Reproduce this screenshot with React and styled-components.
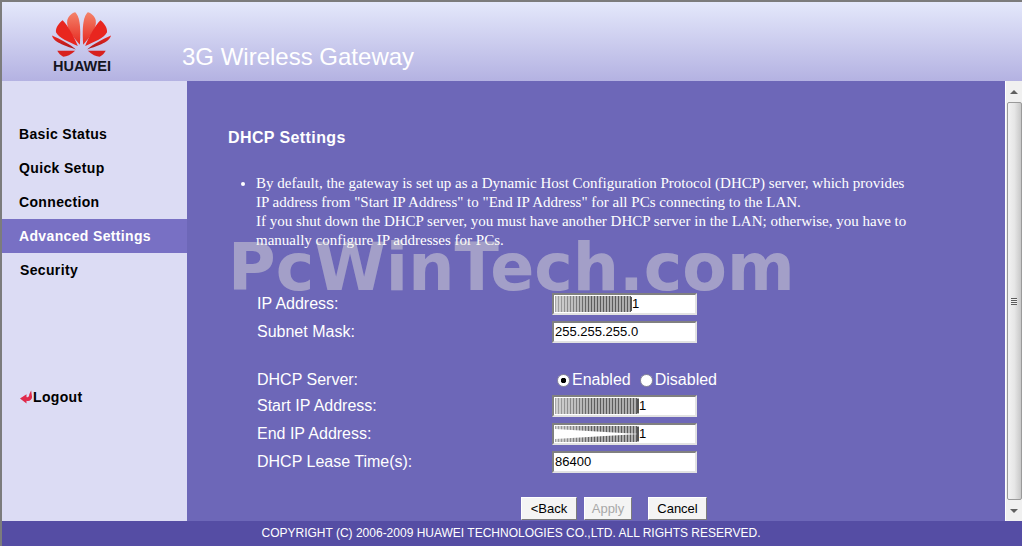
import React from 'react';
import styled, { createGlobalStyle } from 'styled-components';

const GlobalStyle = createGlobalStyle`
  html, body {
    margin: 0;
    height: 100%;
    overflow: hidden;
  }
`;

const Page = styled.div`
  width: 1022px;
  height: 546px;
  box-sizing: border-box;
  border-top: 2px solid #7c7c7c;
  border-left: 2px solid #7c7c7c;
  display: flex;
  flex-direction: column;
  font-family: 'Liberation Sans', Arial, sans-serif;
  overflow: hidden;
`;

const Header = styled.header`
  height: 79px;
  flex: none;
  display: flex;
  background: linear-gradient(#e4e8fb, #b4b2e2);
`;

const LogoBox = styled.div`
  width: 180px;
  flex: none;
  padding: 10px 0 0 50px;
  box-sizing: border-box;
  display: flex;
  flex-direction: column;
`;

const LogoWord = styled.div`
  font-size: 14.5px;
  line-height: 13px;
  font-weight: 700;
  color: #14141e;
  width: 60px;
  text-align: center;
  margin-top: 3px;
`;

const ProductName = styled.div`
  font-size: 24px;
  line-height: 28px;
  color: #fff;
  margin-top: 41px;
`;

const Middle = styled.div`
  flex: 1;
  min-height: 0;
  display: flex;
`;

const Sidebar = styled.nav`
  width: 185px;
  flex: none;
  background: #dcdcf4;
  padding-top: 36px;
  box-sizing: border-box;
  display: flex;
  flex-direction: column;
`;

const NavItem = styled.div`
  height: 34px;
  line-height: 34px;
  padding-left: ${(p) => p.$indent || 17}px;
  font-size: 14px;
  font-weight: 700;
  letter-spacing: 0.35px;
  color: ${(p) => (p.$active ? '#fff' : '#000')};
  background: ${(p) => (p.$active ? '#7870c4' : 'transparent')};
`;

const LogoutRow = styled.div`
  margin-top: 93px;
  height: 34px;
  padding-left: 18px;
  display: flex;
  align-items: center;
  font-size: 14px;
  font-weight: 700;
  letter-spacing: 0.35px;
  color: #000;
`;

const Content = styled.main`
  flex: 1;
  position: relative;
  background: #6d67b8;
  padding: 47px 0 0 41px;
  box-sizing: border-box;
  color: #fff;
  overflow: hidden;
`;

const Title = styled.h1`
  margin: 0;
  font-size: 16px;
  line-height: 20px;
  font-weight: 700;
  letter-spacing: 0.4px;
`;

const Notes = styled.ul`
  margin: 26px 0 0;
  padding: 0 0 0 28px;
  width: 660px;
  font-family: 'Liberation Serif', 'Times New Roman', serif;
  font-size: 15px;
  line-height: 19px;
`;

const Watermark = styled.div`
  position: absolute;
  left: 41px;
  top: 149px;
  font-family: 'DejaVu Sans', Verdana, sans-serif;
  font-size: 65px;
  line-height: 76px;
  font-weight: 700;
  color: rgba(244, 245, 224, 0.4);
  white-space: nowrap;
`;

const Form = styled.form`
  margin: 40px 0 0 29px;
  display: flex;
  flex-direction: column;
`;

const Row = styled.div`
  display: flex;
  align-items: center;
  height: ${(p) => p.$height || 28}px;
  margin-top: ${(p) => p.$gap || 0}px;
  font-size: 16px;
`;

const Label = styled.span`
  width: 295px;
  flex: none;
`;

const Field = styled.div`
  width: 145px;
  height: 22px;
  box-sizing: border-box;
  background: #fff;
  border: 2px solid;
  border-color: #808080 #e2e2e2 #e2e2e2 #808080;
  color: #000;
  font-size: 13px;
  line-height: 18px;
  padding-left: 1px;
  display: flex;
  align-items: center;
  white-space: nowrap;
  overflow: hidden;
`;

const Radios = styled.div`
  display: flex;
  align-items: center;
  padding-left: 5px;
  font-size: 16px;
`;

const Radio = styled.span`
  width: 13px;
  height: 13px;
  box-sizing: border-box;
  flex: none;
  border-radius: 50%;
  border: 1px solid #8d8d9d;
  background: radial-gradient(circle, ${(p) => (p.$on ? '#000 0 2.5px, #fff 3px' : '#fff 0 100%')});
  margin: 1px 2px 0 0;
`;

const RadioText = styled.span`
  margin-right: 9px;
`;

const Buttons = styled.div`
  display: flex;
  margin: 21px 0 0 264px;
`;

const Button = styled.button`
  height: 23px;
  width: ${(p) => p.$width}px;
  margin-right: ${(p) => p.$after || 0}px;
  padding: 0;
  box-sizing: border-box;
  font-family: 'Liberation Sans', Arial, sans-serif;
  font-size: 13px;
  color: #000;
  background: #f4f4f4;
  border: 1px solid;
  border-color: #fff #7c7c7c #7c7c7c #fff;
  &:disabled {
    color: #a8a8a8;
  }
`;

const Scrollbar = styled.div`
  width: 17px;
  flex: none;
  background: #f0f0f0;
  border-left: 1px solid #fff;
  box-sizing: border-box;
  display: flex;
  flex-direction: column;
  align-items: center;
`;

const ArrowBox = styled.div`
  height: 21px;
  flex: none;
  display: flex;
  align-items: center;
`;

const Arrow = styled.span`
  width: 0;
  height: 0;
  border-left: 4px solid transparent;
  border-right: 4px solid transparent;
  ${(p) => (p.$down ? 'border-top: 4px solid #606060;' : 'border-bottom: 4px solid #606060;')}
`;

const Thumb = styled.div`
  flex: 1;
  width: 15px;
  box-sizing: border-box;
  border: 1px solid #9a9a9a;
  border-radius: 2px;
  background: linear-gradient(90deg, #f2f2f2, #e6e6e6 50%, #c8c8c8);
  display: flex;
  align-items: center;
  justify-content: center;
`;

const Grip = styled.div`
  width: 6px;
  height: 7px;
  background: repeating-linear-gradient(#5c5c5c 0 1px, #f0f0f0 1px 2px);
`;

const Footer = styled.footer`
  height: 25px;
  flex: none;
  margin-left: -2px;
  background: #554da4;
  color: #fff;
  font-size: 12px;
  line-height: 25px;
  text-align: center;
`;

const LogoMark = () => (
  <svg width="59" height="45" viewBox="0 0 178 134">
    <defs>
      <linearGradient id="petalTop" x1="0" y1="0" x2="0" y2="1">
        <stop offset="0" stopColor="#f4836a" />
        <stop offset="1" stopColor="#e6281f" />
      </linearGradient>
      <linearGradient id="petalLow" x1="0" y1="0" x2="0" y2="1">
        <stop offset="0" stopColor="#ee2a22" />
        <stop offset="1" stopColor="#a81418" />
      </linearGradient>
    </defs>
    {[false, true].map((flip) => (
      <g key={String(flip)} transform={flip ? 'matrix(-1 0 0 1 178 0)' : undefined}>
        <path d="M84 98C62 72 42 48 46 24C50 10 62 2 70 0C82 12 88 36 84 98Z" fill="url(#petalTop)" />
        <path d="M78 102C50 88 20 78 12 60C10 46 22 32 32 24C48 40 68 76 78 102Z" fill="#e8261f" />
        <path d="M72 112C50 104 4 92 0 70C26 82 54 96 72 112Z" fill="url(#petalLow)" />
        <path d="M16 116L70 116C58 128 44 134 34 134C26 130 20 124 16 116Z" fill="#d8201e" />
      </g>
    ))}
  </svg>
);

const LogoutIcon = () => (
  <svg width="13" height="14" viewBox="0 0 14 14">
    <path d="M12 0L13 7C13 10 10 12 7 11L7 14L0 8.500L7 4L7 7C9 8 10 6 10 4Z" fill="#e02a4c" />
  </svg>
);

// smeared address in the original shot, drawn as thin vertical strokes.
// gap leaves the middle open at the left end, as in the End IP field
const Smear = ({ width, gap = 0 }) => (
  <svg width={width} height="18" viewBox={`0 0 ${width} 18`} style={{ flex: 'none' }}>
    {Array.from({ length: Math.floor(width / 1.5) }, (_, i) => {
      const x = i * 1.5 + 0.5;
      const t = Math.min(1, x / (width * 0.45));
      const open = (gap * (width - x)) / width;
      const mid = 9;
      const d = `M${x} 1V${mid - open / 2}M${x} ${mid + open / 2}V17`;
      return <path key={i} d={d} stroke="#4a4a4a" strokeWidth="0.9" strokeOpacity={0.55 + 0.45 * t} fill="none" />;
    })}
    <rect x={width - 2} y="2" width="2" height="14" fill="#555" />
  </svg>
);

const App = () => (
  <>
    <GlobalStyle />
    <Page>
      <Header>
        <LogoBox>
          <LogoMark />
          <LogoWord>HUAWEI</LogoWord>
        </LogoBox>
        <ProductName>3G Wireless Gateway</ProductName>
      </Header>
      <Middle>
        <Sidebar>
          <NavItem>Basic Status</NavItem>
          <NavItem>Quick Setup</NavItem>
          <NavItem>Connection</NavItem>
          <NavItem $active>Advanced Settings</NavItem>
          <NavItem $indent={18}>Security</NavItem>
          <LogoutRow>
            <LogoutIcon />
            Logout
          </LogoutRow>
        </Sidebar>
        <Content>
          <Title>DHCP Settings</Title>
          <Notes>
            <li>
              By default, the gateway is set up as a Dynamic Host Configuration Protocol (DHCP) server, which provides
              IP address from "Start IP Address" to "End IP Address" for all PCs connecting to the LAN.
              <br />
              If you shut down the DHCP server, you must have another DHCP server in the LAN; otherwise, you have to
              manually configure IP addresses for PCs.
            </li>
          </Notes>
          <Watermark>PcWinTech.com</Watermark>
          <Form>
            <Row>
              <Label>IP Address:</Label>
              <Field>
                <Smear width={77} />1
              </Field>
            </Row>
            <Row>
              <Label>Subnet Mask:</Label>
              <Field>255.255.255.0</Field>
            </Row>
            <Row $gap={20} $height={28}>
              <Label>DHCP Server:</Label>
              <Radios>
                <Radio $on />
                <RadioText>Enabled</RadioText>
                <Radio />
                <span>Disabled</span>
              </Radios>
            </Row>
            <Row $gap={-2}>
              <Label>Start IP Address:</Label>
              <Field>
                <Smear width={84} />1
              </Field>
            </Row>
            <Row>
              <Label>End IP Address:</Label>
              <Field>
                <Smear width={84} gap={10} />1
              </Field>
            </Row>
            <Row>
              <Label>DHCP Lease Time(s):</Label>
              <Field>86400</Field>
            </Row>
            <Buttons>
              <Button type="button" $width={56} $after={7}>
                &lt;Back
              </Button>
              <Button type="button" $width={48} $after={16} disabled>
                Apply
              </Button>
              <Button type="button" $width={59}>
                Cancel
              </Button>
            </Buttons>
          </Form>
        </Content>
        <Scrollbar>
          <ArrowBox>
            <Arrow />
          </ArrowBox>
          <Thumb>
            <Grip />
          </Thumb>
          <ArrowBox>
            <Arrow $down />
          </ArrowBox>
        </Scrollbar>
      </Middle>
      <Footer>COPYRIGHT (C) 2006-2009 HUAWEI TECHNOLOGIES CO.,LTD. ALL RIGHTS RESERVED.</Footer>
    </Page>
  </>
);

export default App;
